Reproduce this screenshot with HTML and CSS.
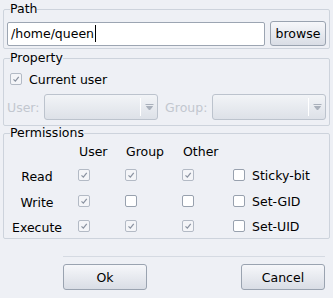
FILE: index.html
```html
<!DOCTYPE html>
<html lang="en">
<head>
  <meta charset="UTF-8" />
  <title>Permissions</title>
  <link rel="stylesheet" href="styles.css">
</head>
<body>
  <div class="dialog">
    <fieldset class="group path-group">
      <legend>Path</legend>
      <div class="path-row">
        <div class="text-field">/home/queen<span class="caret"></span></div>
        <button class="btn browse">browse</button>
      </div>
    </fieldset>

    <fieldset class="group property-group">
      <legend>Property</legend>
      <div class="check-row">
        <span class="cb checked"><svg viewBox="0 0 12 12"><path d="M3 6.5 L5.2 8.6 L9.3 3.4" /></svg></span>
        <span>Current user</span>
      </div>
      <div class="owner-row">
        <span class="dim">User:</span>
        <div class="combo"><span class="combo-arrow"><svg viewBox="0 0 9 7"><path d="M0.5 0.5 H8.5 M1.5 2.5 H7.5 L4.5 6 Z" /></svg></span></div>
        <span class="dim">Group:</span>
        <div class="combo"><span class="combo-arrow"><svg viewBox="0 0 9 7"><path d="M0.5 0.5 H8.5 M1.5 2.5 H7.5 L4.5 6 Z" /></svg></span></div>
      </div>
    </fieldset>

    <fieldset class="group perm-group">
      <legend>Permissions</legend>
      <div class="perm-grid">
        <span></span>
        <span class="head">User</span>
        <span class="head">Group</span>
        <span class="head">Other</span>
        <span></span>

        <span class="row-label">Read</span>
        <span class="cell"><span class="cb checked"><svg viewBox="0 0 12 12"><path d="M3 6.5 L5.2 8.6 L9.3 3.4" /></svg></span></span>
        <span class="cell"><span class="cb checked"><svg viewBox="0 0 12 12"><path d="M3 6.5 L5.2 8.6 L9.3 3.4" /></svg></span></span>
        <span class="cell"><span class="cb checked"><svg viewBox="0 0 12 12"><path d="M3 6.5 L5.2 8.6 L9.3 3.4" /></svg></span></span>
        <span class="cell"><span class="cb"></span><span class="cb-text">Sticky-bit</span></span>

        <span class="row-label">Write</span>
        <span class="cell"><span class="cb checked"><svg viewBox="0 0 12 12"><path d="M3 6.5 L5.2 8.6 L9.3 3.4" /></svg></span></span>
        <span class="cell"><span class="cb"></span></span>
        <span class="cell"><span class="cb"></span></span>
        <span class="cell"><span class="cb"></span><span class="cb-text">Set-GID</span></span>

        <span class="row-label">Execute</span>
        <span class="cell"><span class="cb checked"><svg viewBox="0 0 12 12"><path d="M3 6.5 L5.2 8.6 L9.3 3.4" /></svg></span></span>
        <span class="cell"><span class="cb checked"><svg viewBox="0 0 12 12"><path d="M3 6.5 L5.2 8.6 L9.3 3.4" /></svg></span></span>
        <span class="cell"><span class="cb checked"><svg viewBox="0 0 12 12"><path d="M3 6.5 L5.2 8.6 L9.3 3.4" /></svg></span></span>
        <span class="cell"><span class="cb"></span><span class="cb-text">Set-UID</span></span>
      </div>
    </fieldset>

    <div class="footer">
      <div class="separator"></div>
      <div class="buttons">
        <button class="btn action">Ok</button>
        <button class="btn action">Cancel</button>
      </div>
    </div>
  </div>
</body>
</html>
```

FILE: styles.css
```css
* {
  box-sizing: border-box;
}

body {
  margin: 0;
  background: #eef0f5;
  font-family: "DejaVu Sans", sans-serif;
  font-size: 12.5px;
  color: #000;
}

.dialog {
  width: 333px;
  height: 298px;
  padding: 2px 3px 0 3px;
  display: flex;
  flex-direction: column;
}

.group {
  margin: 0;
  border: 1px solid #cdd3dc;
  border-radius: 2px;
  padding: 0 3px 2px 3px;
  min-width: 0;
}

.group legend {
  padding: 0;
  margin-left: 3px;
  line-height: 14px;
}

.path-row {
  display: flex;
  align-items: center;
  gap: 5px;
  padding-top: 5px;
}

.text-field {
  flex: 1;
  height: 24px;
  background: #fff;
  border: 1px solid #9ca5b2;
  border-radius: 2px;
  padding: 0 3px;
  display: flex;
  align-items: center;
}

.caret {
  display: inline-block;
  width: 1px;
  height: 17px;
  background: #000;
  margin-left: 1px;
}

.btn {
  font-family: inherit;
  font-size: 12.5px;
  color: #000;
  border: 1px solid #9aa3b0;
  border-radius: 3px;
  background: linear-gradient(#f6f7fa, #d9dde5);
  padding: 0;
}

.browse {
  width: 56px;
  height: 25px;
}

.property-group {
  margin-top: 2px;
  padding-bottom: 5px;
}

.check-row {
  display: flex;
  align-items: center;
  gap: 7px;
  height: 20px;
  margin-top: 4px;
  padding-left: 3px;
}

.cb {
  width: 12px;
  height: 12px;
  border: 1px solid #98a1ae;
  border-radius: 2px;
  background: #fff;
  display: inline-flex;
  flex: none;
}

.cb.checked {
  border-color: #b3bac5;
  background: #f4f5f8;
}

.cb svg {
  width: 10px;
  height: 10px;
}

.cb svg path {
  fill: none;
  stroke: #8b93a1;
  stroke-width: 1.5;
}

.owner-row {
  display: flex;
  align-items: center;
  gap: 5px;
  margin-top: 5px;
}

.owner-row .combo + .dim {
  margin-left: 2px;
}

.dim {
  color: #c2c7cf;
}

.combo {
  flex: 1;
  height: 26px;
  border: 1px solid #bcc3cd;
  border-radius: 3px;
  background: linear-gradient(#f2f4f7, #dde1e8);
  display: flex;
  justify-content: flex-end;
  align-items: center;
}

.combo-arrow {
  height: 18px;
  width: 17px;
  border-left: 1px solid #fff;
  display: flex;
  align-items: center;
  justify-content: center;
}

.combo-arrow svg {
  width: 9px;
  height: 7px;
}

.combo-arrow svg path {
  fill: #a9b0bb;
  stroke: #a9b0bb;
  stroke-width: 1;
}

.perm-group {
  margin-top: 0;
  padding-bottom: 0;
}

.perm-grid {
  display: grid;
  grid-template-columns: 71px 47px 57px 51px auto;
  grid-template-rows: 22px 26px 26px 24px;
}

.head {
  align-self: center;
  padding-left: 1px;
}

.row-label {
  text-align: center;
  padding-right: 11px;
  align-self: center;
  padding-top: 2px;
}

.cell {
  display: flex;
  align-items: center;
  gap: 7px;
}

.footer {
  margin-top: 17px;
  padding: 0 5px 0 60px;
}

.separator {
  height: 1px;
  background: #d5dae2;
}

.buttons {
  display: flex;
  justify-content: space-between;
  margin-top: 7px;
}

.action {
  width: 84px;
  height: 26px;
}
```
